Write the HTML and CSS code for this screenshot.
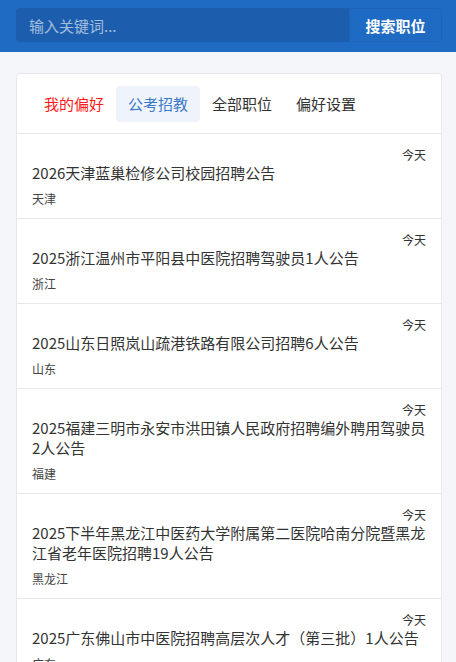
FILE: index.html
```html
<!DOCTYPE html>
<html lang="zh-CN">
<head>
    <meta charset="UTF-8">
    <title>职位搜索</title>
    <link rel="stylesheet" href="styles.css">
</head>
<body>
    <header class="search-bar">
        <input type="text" class="search-input" placeholder="输入关键词...">
        <button type="button" class="search-btn">搜索职位</button>
    </header>

    <main class="card">
        <nav class="tabs">
            <a class="tab tab-fav">我的偏好</a>
            <a class="tab active">公考招教</a>
            <a class="tab">全部职位</a>
            <a class="tab">偏好设置</a>
        </nav>

        <ul class="job-list">
            <li class="job">
                <div class="job-date">今天</div>
                <div class="job-title">2026天津蓝巢检修公司校园招聘公告</div>
                <div class="job-place">天津</div>
            </li>
            <li class="job">
                <div class="job-date">今天</div>
                <div class="job-title">2025浙江温州市平阳县中医院招聘驾驶员1人公告</div>
                <div class="job-place">浙江</div>
            </li>
            <li class="job">
                <div class="job-date">今天</div>
                <div class="job-title">2025山东日照岚山疏港铁路有限公司招聘6人公告</div>
                <div class="job-place">山东</div>
            </li>
            <li class="job">
                <div class="job-date">今天</div>
                <div class="job-title">2025福建三明市永安市洪田镇人民政府招聘编外聘用驾驶员2人公告</div>
                <div class="job-place">福建</div>
            </li>
            <li class="job">
                <div class="job-date">今天</div>
                <div class="job-title">2025下半年黑龙江中医药大学附属第二医院哈南分院暨黑龙江省老年医院招聘19人公告</div>
                <div class="job-place">黑龙江</div>
            </li>
            <li class="job">
                <div class="job-date">今天</div>
                <div class="job-title">2025广东佛山市中医院招聘高层次人才（第三批）1人公告</div>
                <div class="job-place">广东</div>
            </li>
        </ul>
    </main>
</body>
</html>
```

FILE: styles.css
```css
* {
    margin: 0;
    padding: 0;
    box-sizing: border-box;
}

body {
    font-family: "Noto Sans CJK SC", "Noto Sans", sans-serif;
    background: #f5f6f9;
    color: #333;
}

.search-bar {
    display: flex;
    background: #1f6bc4;
    padding: 8px 14px 10px 16px;
}

.search-input {
    flex: 1;
    height: 34px;
    padding: 0 13px;
    border: none;
    border-radius: 4px 0 0 4px;
    background: #1c5ead;
    color: #fff;
    font-family: inherit;
    font-size: 15px;
    outline: none;
}

.search-input::placeholder {
    color: rgba(255, 255, 255, 0.6);
}

.search-btn {
    width: 93px;
    height: 34px;
    border: 1px solid rgba(0, 0, 0, 0.06);
    border-radius: 0 4px 4px 0;
    background: #1f6bc4;
    color: #fff;
    font-family: inherit;
    font-size: 15px;
    font-weight: bold;
}

.card {
    margin: 21px 14px 0 16px;
    background: #fff;
    border: 1px solid #e6e8eb;
    border-radius: 4px;
}

.tabs {
    display: flex;
    padding: 12px 15px 11px;
    border-bottom: 1px solid #e6e8eb;
}

.tab {
    padding: 8px 12px;
    font-size: 15px;
    line-height: 20px;
    border-radius: 4px;
    color: #333;
}

.tab-fav {
    color: #ff1a1a;
}

.tab.active {
    background: #eff4fc;
    color: #3b78c8;
}

.job-list {
    list-style: none;
}

.job {
    padding: 13px 15px 10px 15px;
    border-bottom: 1px solid #e6e8eb;
}

.job-date {
    text-align: right;
    font-size: 12px;
    line-height: 16px;
}

.job-title {
    font-size: 15px;
    line-height: 20px;
    color: #333;
}

.job-place {
    margin-top: 7px;
    font-size: 12px;
    line-height: 18px;
    color: #444;
}
```
